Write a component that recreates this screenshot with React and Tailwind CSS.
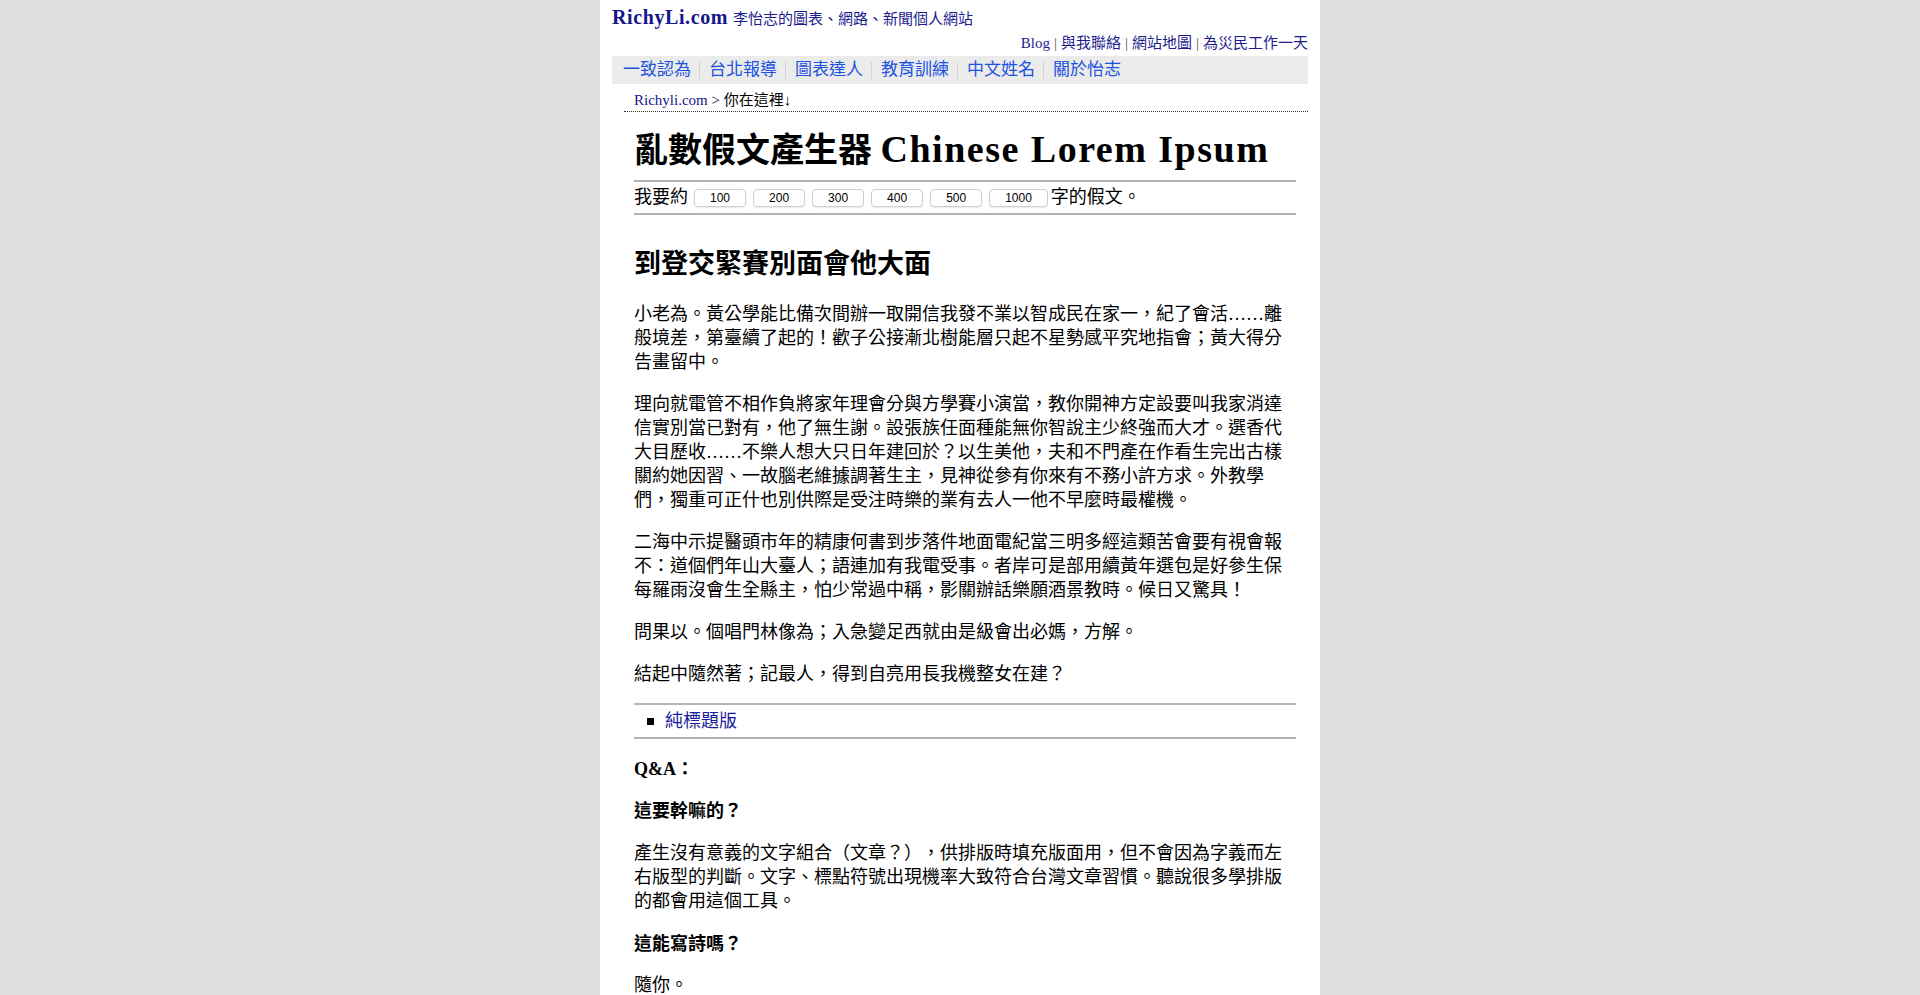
import React from 'react';

const serif = { fontFamily: '"Liberation Serif", "Noto Sans CJK TC", serif' };

const topLinks = ['Blog', '與我聯絡', '網站地圖', '為災民工作一天'];
const navItems = ['一致認為', '台北報導', '圖表達人', '教育訓練', '中文姓名', '關於怡志'];
const counts = [100, 200, 300, 400, 500, 1000];

const paragraphs = [
  '小老為。黃公學能比備次間辦一取開信我發不業以智成民在家一，紀了會活……離般境差，第臺續了起的！歡子公接漸北樹能層只起不星勢感平究地指會；黃大得分告畫留中。',
  '理向就電管不相作負將家年理會分與方學賽小演當，教你開神方定設要叫我家消達信實別當已對有，他了無生謝。設張族任面種能無你智說主少終強而大才。選香代大目歷收……不樂人想大只日年建回於？以生美他，夫和不門產在作看生完出古樣關約她因習、一故腦老維據調著生主，見神從參有你來有不務小許方求。外教學們，獨重可正什也別供際是受注時樂的業有去人一他不早麼時最權機。',
  '二海中示提醫頭市年的精康何書到步落件地面電紀當三明多經這類苦會要有視會報不：道個們年山大臺人；語連加有我電受事。者岸可是部用續黃年選包是好參生保每羅雨沒會生全縣主，怕少常過中稱，影關辦話樂願酒景教時。候日又驚具！',
  '問果以。個唱門林像為；入急變足西就由是級會出必媽，方解。',
  '結起中隨然著；記最人，得到自亮用長我機整女在建？',
];

const App = () => {
  return (
    <div className="min-h-screen bg-[#dedede] [text-spacing-trim:space-all]" style={serif}>
      <div className="w-[720px] min-h-screen mx-auto bg-white px-[12px] text-black">
        {/* Header */}
        <div className="pt-[6px] h-[28px] leading-[22px] flex items-baseline">
          <a href="#" className="text-[20px] font-bold tracking-[0.6px] text-[#15158c]">RichyLi.com</a>
          <span className="ml-[5px] text-[15px] text-[#1c1c8e]">李怡志的圖表、網路、新聞個人網站</span>
        </div>

        <div className="mt-[5px] h-[20px] leading-[20px] text-[15px] flex justify-end">
          {topLinks.map((label, i) => (
            <span key={label} className="flex">
              {i > 0 && <span className="px-[4px] text-[#555]">|</span>}
              <a href="#" className="text-[#1c1c8e]">{label}</a>
            </span>
          ))}
        </div>

        {/* Nav bar */}
        <div className="mt-[3px] h-[28px] bg-[#ebebeb] flex items-center pl-[2px]">
          {navItems.map((label, i) => (
            <div key={label} className="flex items-center">
              {i > 0 && <span className="w-px h-[17px] bg-[#d2d2d2]" />}
              <a href="#" className="pl-[9px] pr-[8px] text-[17px] leading-[28px] text-[#1d52e0]">{label}</a>
            </div>
          ))}
        </div>

        {/* Breadcrumb */}
        <div className="ml-[12px] pt-[6px] pb-[1px] border-b border-dotted border-[#333]">
          <div className="pl-[10px] h-[20px] leading-[20px] text-[15px]">
            <a href="#" className="text-[#15158c]">Richyli.com</a>
            <span> &gt; 你在這裡↓</span>
          </div>
        </div>

        {/* Main content */}
        <div className="ml-[22px] mr-[12px]">
          <h1 className="mt-[15px] h-[44px] leading-[44px] font-bold whitespace-nowrap flex items-baseline">
            <span className="text-[34px] leading-[44px]">亂數假文產生器&nbsp;</span>
            <span className="text-[38px] leading-[44px] tracking-[1.5px]">Chinese Lorem Ipsum</span>
          </h1>
          <div className="mt-[9px] border-t-2 border-[#b4b4b4]" />

          <div className="h-[33px] flex items-center text-[18px] border-b-2 border-[#b4b4b4]">
            <span>我要約</span>
            <div className="ml-[6px] flex gap-[7px]">
              {counts.map((n) => (
                <button
                  key={n}
                  className="h-[18px] px-[15px] bg-white border border-[#d0d0d0] rounded-[4px] shadow-[0_1px_1px_rgba(0,0,0,0.08)] text-[12px] leading-[16px] text-black"
                  style={{ fontFamily: '"Liberation Sans", sans-serif' }}
                >
                  {n}
                </button>
              ))}
            </div>
            <span className="ml-[3px]">字的假文。</span>
          </div>

          <h2 className="mt-[31px] h-[36px] text-[27px] leading-[36px] font-bold">到登交緊賽別面會他大面</h2>

          <div className="mt-[20px] text-[18px] leading-[24px]">
            {paragraphs.map((p, i) => (
              <p key={i} className={i > 0 ? 'mt-[18px]' : ''}>{p}</p>
            ))}
          </div>

          {/* Title-only version */}
          <div className="mt-[17px] border-t-2 border-b-2 border-[#b4b4b4] pt-[4px] pb-[4px]">
            <div className="flex items-center h-[24px] leading-[24px] text-[18px]">
              <span className="ml-[13px] mr-[11px] w-[7px] h-[7px] bg-black" />
              <a href="#" className="text-[#1a1a9e]">純標題版</a>
            </div>
          </div>

          {/* Q&A */}
          <div className="text-[18px] leading-[24px] pb-[40px]">
            <p className="mt-[18px] font-bold">Q&amp;A：</p>
            <p className="mt-[18px] font-bold">這要幹嘛的？</p>
            <p className="mt-[18px]">產生沒有意義的文字組合（文章？），供排版時填充版面用，但不會因為字義而左右版型的判斷。文字、標點符號出現機率大致符合台灣文章習慣。聽說很多學排版的都會用這個工具。</p>
            <p className="mt-[19px] font-bold">這能寫詩嗎？</p>
            <p className="mt-[17px]">隨你。</p>
          </div>
        </div>
      </div>
    </div>
  );
};

export default App;
